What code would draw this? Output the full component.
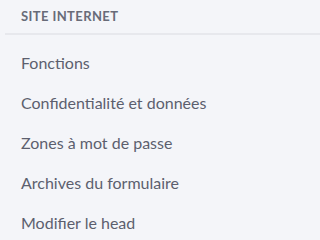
const items = [
  "Fonctions",
  "Confidentialité et données",
  "Zones à mot de passe",
  "Archives du formulaire",
  "Modifier le head",
]

export default function App() {
  return (
    <div className="w-full min-h-screen bg-[#f4f5f9] font-['Lato',sans-serif] overflow-hidden">
      <div className="pl-[21px] pt-[8px] h-[33px] text-[13px] tracking-[0.4px] font-bold text-[#686b78] leading-[16px]">
        SITE INTERNET
      </div>
      <div className="ml-[5px] h-[2px] bg-[#e7e8ed]" />
      <ul className="pt-[17px]">
        {items.map((item) => (
          <li key={item} className="pl-[21px] h-[40px] text-[16px] leading-[21px] text-[#5c5f6e]">
            {item}
          </li>
        ))}
      </ul>
    </div>
  )
}
